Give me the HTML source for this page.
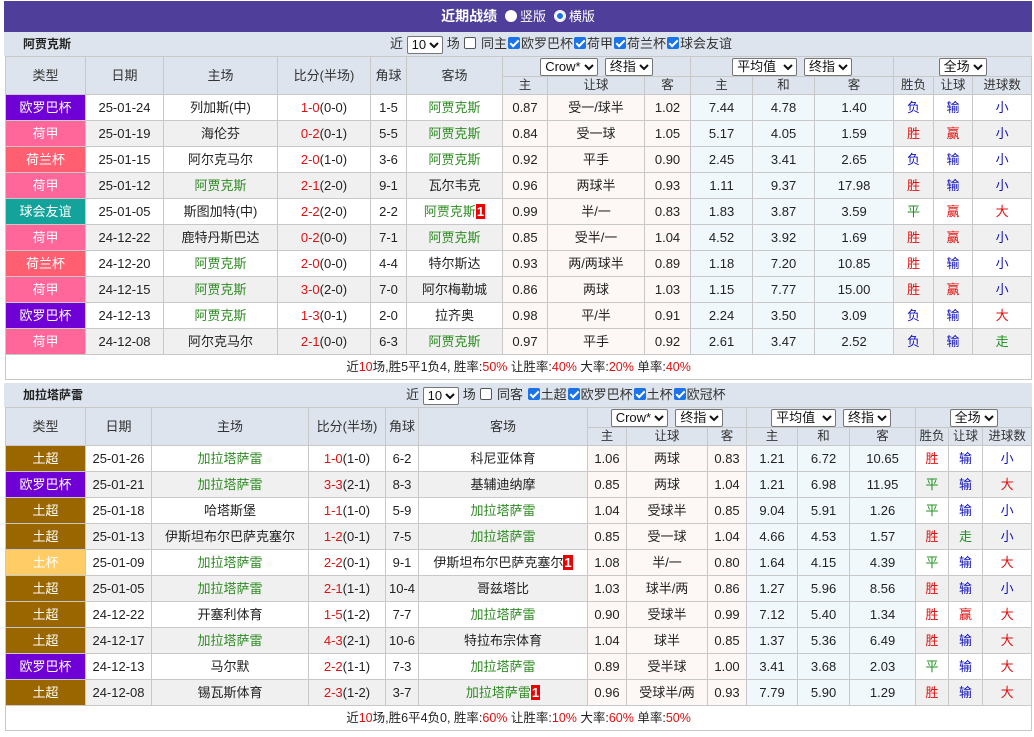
<!DOCTYPE html>
<html><head><meta charset="utf-8"><style>
*{margin:0;padding:0;box-sizing:border-box}
body{width:1034px;height:737px;background:#fff;font-family:"Liberation Sans","Noto Sans CJK SC",sans-serif;font-size:13px;color:#222;position:relative;overflow:hidden}
.title{position:absolute;left:4px;top:1px;width:1028px;height:31px;background:#4f3f9a;color:#fff;font-weight:bold;font-size:14px;text-align:center;line-height:31px}
.title .r{display:inline-block;width:12px;height:12px;border-radius:50%;background:#fff;vertical-align:-1px;margin:0 3px 0 4px;position:relative}
.title .r.on{border:1px solid #fff;background:#1a73e8;box-shadow:inset 0 0 0 2px #fff}
.title span.t{font-weight:normal;font-size:13px}
.bar{position:absolute;left:4px;width:1028px;height:24px;background:#dde4ee;line-height:24px}
.bar .nm{position:absolute;left:19px;font-size:12px;color:#222;font-weight:bold}
.bar .ct{position:absolute;font-size:13px;color:#333}
.cb{display:inline-block;width:12px;height:12px;border:1px solid #555;border-radius:2px;background:#fff;vertical-align:-1px;margin:0 1px}
.cb.on{background:#1a73e8;border-color:#1a73e8;position:relative}
.cb.on:after{content:"";position:absolute;left:3px;top:0px;width:3px;height:7px;border:solid #fff;border-width:0 2px 2px 0;transform:rotate(45deg)}
.sel{display:inline-block;height:18px;line-height:16px;border:1px solid #767676;border-radius:2px;background:#fff;padding:0 3px 0 4px;font-size:13px;color:#111;vertical-align:middle;text-align:left}
.sel svg{vertical-align:0;margin-left:3px}
table{position:absolute;left:5px;border-collapse:collapse;table-layout:fixed;width:1026px}
td{border:1px solid #c8c8c8;text-align:center;height:26px;white-space:nowrap;overflow:hidden;font-size:13px;line-height:16px}
thead td{background:#dde4ee;color:#333;line-height:15px}
thead tr.h1 td{height:20px}
thead tr.h2 td{height:18px;font-size:12.5px}
.ty{color:#fff}
.g{color:#2e8b22}
.rd{color:#e01010}
.bl{color:#1010c0}
.gr{color:#1f8f1f}
tr.e td{background:#f0f0f0}
tr td.o{background:#fdf8f5}
tr td.p{background:#f1f8fc}
.bd{display:inline-block;background:#e00;color:#fff;font-weight:bold;padding:0 1px;line-height:15px}
.sum td{height:25px;background:#fff;font-size:12.5px}
tr td.ep{background:#6f00d6}tr td.hj{background:#ff6699}tr td.hb{background:#ff5f70}tr td.yy{background:#14a39a}tr td.tc{background:#996600}tr td.tb{background:#ffcc66}
</style></head><body>
<div class="title">近期战绩 <span class="r"></span><span class="t">竖版</span> <span class="r on"></span><span class="t">横版</span></div>

<div class="bar" style="top:32px"><span class="nm">阿贾克斯</span>
<span class="ct" style="left:386px">近 <span class="sel">10<svg width="10" height="7" viewBox="0 0 10 7"><path d="M1 1l4 4 4-4" stroke="#111" stroke-width="2" fill="none"/></svg></span> 场 <span class="cb"></span> 同主<span class="cb on"></span>欧罗巴杯<span class="cb on"></span>荷甲<span class="cb on"></span>荷兰杯<span class="cb on"></span>球会友谊</span></div>

<table style="top:56px">
<colgroup><col style="width:80px"><col style="width:78px"><col style="width:114px"><col style="width:93px"><col style="width:36px"><col style="width:96px"><col style="width:45px"><col style="width:97px"><col style="width:46px"><col style="width:62px"><col style="width:62px"><col style="width:79px"><col style="width:40px"><col style="width:39px"><col style="width:59px"></colgroup>
<thead>
<tr class="h1"><td rowspan="2">类型</td><td rowspan="2">日期</td><td rowspan="2">主场</td><td rowspan="2">比分(半场)</td><td rowspan="2">角球</td><td rowspan="2">客场</td>
<td colspan="3"><span class="sel">Crow*<svg width="10" height="7" viewBox="0 0 10 7"><path d="M1 1l4 4 4-4" stroke="#111" stroke-width="2" fill="none"/></svg></span>&nbsp; <span class="sel">终指<svg width="10" height="7" viewBox="0 0 10 7"><path d="M1 1l4 4 4-4" stroke="#111" stroke-width="2" fill="none"/></svg></span></td>
<td colspan="3"><span class="sel">平均值 <svg width="10" height="7" viewBox="0 0 10 7"><path d="M1 1l4 4 4-4" stroke="#111" stroke-width="2" fill="none"/></svg></span>&nbsp; <span class="sel">终指<svg width="10" height="7" viewBox="0 0 10 7"><path d="M1 1l4 4 4-4" stroke="#111" stroke-width="2" fill="none"/></svg></span></td>
<td colspan="3"><span class="sel">全场<svg width="10" height="7" viewBox="0 0 10 7"><path d="M1 1l4 4 4-4" stroke="#111" stroke-width="2" fill="none"/></svg></span></td></tr>
<tr class="h2"><td>主</td><td>让球</td><td>客</td><td>主</td><td>和</td><td>客</td><td>胜负</td><td>让球</td><td>进球数</td></tr>
</thead>
<tbody>
<tr><td class="ty ep">欧罗巴杯</td><td>25-01-24</td><td>列加斯(中)</td><td><span class="rd">1-0</span>(0-0)</td><td>1-5</td><td class="g">阿贾克斯</td><td class="o">0.87</td><td class="o">受一/球半</td><td class="o">1.02</td><td class="p">7.44</td><td class="p">4.78</td><td class="p">1.40</td><td class="bl">负</td><td class="bl">输</td><td class="bl">小</td></tr>
<tr class="e"><td class="ty hj">荷甲</td><td>25-01-19</td><td>海伦芬</td><td><span class="rd">0-2</span>(0-1)</td><td>5-5</td><td class="g">阿贾克斯</td><td class="o">0.84</td><td class="o">受一球</td><td class="o">1.05</td><td class="p">5.17</td><td class="p">4.05</td><td class="p">1.59</td><td class="rd">胜</td><td class="rd">赢</td><td class="bl">小</td></tr>
<tr><td class="ty hb">荷兰杯</td><td>25-01-15</td><td>阿尔克马尔</td><td><span class="rd">2-0</span>(1-0)</td><td>3-6</td><td class="g">阿贾克斯</td><td class="o">0.92</td><td class="o">平手</td><td class="o">0.90</td><td class="p">2.45</td><td class="p">3.41</td><td class="p">2.65</td><td class="bl">负</td><td class="bl">输</td><td class="bl">小</td></tr>
<tr class="e"><td class="ty hj">荷甲</td><td>25-01-12</td><td class="g">阿贾克斯</td><td><span class="rd">2-1</span>(2-0)</td><td>9-1</td><td>瓦尔韦克</td><td class="o">0.96</td><td class="o">两球半</td><td class="o">0.93</td><td class="p">1.11</td><td class="p">9.37</td><td class="p">17.98</td><td class="rd">胜</td><td class="bl">输</td><td class="bl">小</td></tr>
<tr><td class="ty yy">球会友谊</td><td>25-01-05</td><td>斯图加特(中)</td><td><span class="rd">2-2</span>(2-0)</td><td>2-2</td><td class="g">阿贾克斯<span class="bd">1</span></td><td class="o">0.99</td><td class="o">半/一</td><td class="o">0.83</td><td class="p">1.83</td><td class="p">3.87</td><td class="p">3.59</td><td class="gr">平</td><td class="rd">赢</td><td class="rd">大</td></tr>
<tr class="e"><td class="ty hj">荷甲</td><td>24-12-22</td><td>鹿特丹斯巴达</td><td><span class="rd">0-2</span>(0-0)</td><td>7-1</td><td class="g">阿贾克斯</td><td class="o">0.85</td><td class="o">受半/一</td><td class="o">1.04</td><td class="p">4.52</td><td class="p">3.92</td><td class="p">1.69</td><td class="rd">胜</td><td class="rd">赢</td><td class="bl">小</td></tr>
<tr><td class="ty hb">荷兰杯</td><td>24-12-20</td><td class="g">阿贾克斯</td><td><span class="rd">2-0</span>(0-0)</td><td>4-4</td><td>特尔斯达</td><td class="o">0.93</td><td class="o">两/两球半</td><td class="o">0.89</td><td class="p">1.18</td><td class="p">7.20</td><td class="p">10.85</td><td class="rd">胜</td><td class="bl">输</td><td class="bl">小</td></tr>
<tr class="e"><td class="ty hj">荷甲</td><td>24-12-15</td><td class="g">阿贾克斯</td><td><span class="rd">3-0</span>(2-0)</td><td>7-0</td><td>阿尔梅勒城</td><td class="o">0.86</td><td class="o">两球</td><td class="o">1.03</td><td class="p">1.15</td><td class="p">7.77</td><td class="p">15.00</td><td class="rd">胜</td><td class="rd">赢</td><td class="bl">小</td></tr>
<tr><td class="ty ep">欧罗巴杯</td><td>24-12-13</td><td class="g">阿贾克斯</td><td><span class="rd">1-3</span>(0-1)</td><td>2-0</td><td>拉齐奥</td><td class="o">0.98</td><td class="o">平/半</td><td class="o">0.91</td><td class="p">2.24</td><td class="p">3.50</td><td class="p">3.09</td><td class="bl">负</td><td class="bl">输</td><td class="rd">大</td></tr>
<tr class="e"><td class="ty hj">荷甲</td><td>24-12-08</td><td>阿尔克马尔</td><td><span class="rd">2-1</span>(0-0)</td><td>6-3</td><td class="g">阿贾克斯</td><td class="o">0.97</td><td class="o">平手</td><td class="o">0.92</td><td class="p">2.61</td><td class="p">3.47</td><td class="p">2.52</td><td class="bl">负</td><td class="bl">输</td><td class="gr">走</td></tr>
<tr class="sum"><td colspan="15">近<span class="rd">10</span>场,胜5平1负4, 胜率:<span class="rd">50%</span> 让胜率:<span class="rd">40%</span> 大率:<span class="rd">20%</span> 单率:<span class="rd">40%</span></td></tr>
</tbody></table>

<div class="bar" style="top:383px"><span class="nm">加拉塔萨雷</span>
<span class="ct" style="left:402px">近 <span class="sel">10<svg width="10" height="7" viewBox="0 0 10 7"><path d="M1 1l4 4 4-4" stroke="#111" stroke-width="2" fill="none"/></svg></span> 场 <span class="cb"></span> 同客 <span class="cb on"></span>土超<span class="cb on"></span>欧罗巴杯<span class="cb on"></span>土杯<span class="cb on"></span>欧冠杯</span></div>

<table style="top:407px">
<colgroup><col style="width:80px"><col style="width:66px"><col style="width:157px"><col style="width:77px"><col style="width:33px"><col style="width:169px"><col style="width:39px"><col style="width:81px"><col style="width:39px"><col style="width:51px"><col style="width:52px"><col style="width:66px"><col style="width:33px"><col style="width:34px"><col style="width:49px"></colgroup>
<thead>
<tr class="h1"><td rowspan="2">类型</td><td rowspan="2">日期</td><td rowspan="2">主场</td><td rowspan="2">比分(半场)</td><td rowspan="2">角球</td><td rowspan="2">客场</td>
<td colspan="3"><span class="sel">Crow*<svg width="10" height="7" viewBox="0 0 10 7"><path d="M1 1l4 4 4-4" stroke="#111" stroke-width="2" fill="none"/></svg></span>&nbsp; <span class="sel">终指<svg width="10" height="7" viewBox="0 0 10 7"><path d="M1 1l4 4 4-4" stroke="#111" stroke-width="2" fill="none"/></svg></span></td>
<td colspan="3"><span class="sel">平均值 <svg width="10" height="7" viewBox="0 0 10 7"><path d="M1 1l4 4 4-4" stroke="#111" stroke-width="2" fill="none"/></svg></span>&nbsp; <span class="sel">终指<svg width="10" height="7" viewBox="0 0 10 7"><path d="M1 1l4 4 4-4" stroke="#111" stroke-width="2" fill="none"/></svg></span></td>
<td colspan="3"><span class="sel">全场<svg width="10" height="7" viewBox="0 0 10 7"><path d="M1 1l4 4 4-4" stroke="#111" stroke-width="2" fill="none"/></svg></span></td></tr>
<tr class="h2"><td>主</td><td>让球</td><td>客</td><td>主</td><td>和</td><td>客</td><td>胜负</td><td>让球</td><td>进球数</td></tr>
</thead>
<tbody>
<tr><td class="ty tc">土超</td><td>25-01-26</td><td class="g">加拉塔萨雷</td><td><span class="rd">1-0</span>(1-0)</td><td>6-2</td><td>科尼亚体育</td><td class="o">1.06</td><td class="o">两球</td><td class="o">0.83</td><td class="p">1.21</td><td class="p">6.72</td><td class="p">10.65</td><td class="rd">胜</td><td class="bl">输</td><td class="bl">小</td></tr>
<tr class="e"><td class="ty ep">欧罗巴杯</td><td>25-01-21</td><td class="g">加拉塔萨雷</td><td><span class="rd">3-3</span>(2-1)</td><td>8-3</td><td>基辅迪纳摩</td><td class="o">0.85</td><td class="o">两球</td><td class="o">1.04</td><td class="p">1.21</td><td class="p">6.98</td><td class="p">11.95</td><td class="gr">平</td><td class="bl">输</td><td class="rd">大</td></tr>
<tr><td class="ty tc">土超</td><td>25-01-18</td><td>哈塔斯堡</td><td><span class="rd">1-1</span>(1-0)</td><td>5-9</td><td class="g">加拉塔萨雷</td><td class="o">1.04</td><td class="o">受球半</td><td class="o">0.85</td><td class="p">9.04</td><td class="p">5.91</td><td class="p">1.26</td><td class="gr">平</td><td class="bl">输</td><td class="bl">小</td></tr>
<tr class="e"><td class="ty tc">土超</td><td>25-01-13</td><td>伊斯坦布尔巴萨克塞尔</td><td><span class="rd">1-2</span>(0-1)</td><td>7-5</td><td class="g">加拉塔萨雷</td><td class="o">0.85</td><td class="o">受一球</td><td class="o">1.04</td><td class="p">4.66</td><td class="p">4.53</td><td class="p">1.57</td><td class="rd">胜</td><td class="gr">走</td><td class="bl">小</td></tr>
<tr><td class="ty tb">土杯</td><td>25-01-09</td><td class="g">加拉塔萨雷</td><td><span class="rd">2-2</span>(0-1)</td><td>9-1</td><td>伊斯坦布尔巴萨克塞尔<span class="bd">1</span></td><td class="o">1.08</td><td class="o">半/一</td><td class="o">0.80</td><td class="p">1.64</td><td class="p">4.15</td><td class="p">4.39</td><td class="gr">平</td><td class="bl">输</td><td class="rd">大</td></tr>
<tr class="e"><td class="ty tc">土超</td><td>25-01-05</td><td class="g">加拉塔萨雷</td><td><span class="rd">2-1</span>(1-1)</td><td>10-4</td><td>哥兹塔比</td><td class="o">1.03</td><td class="o">球半/两</td><td class="o">0.86</td><td class="p">1.27</td><td class="p">5.96</td><td class="p">8.56</td><td class="rd">胜</td><td class="bl">输</td><td class="bl">小</td></tr>
<tr><td class="ty tc">土超</td><td>24-12-22</td><td>开塞利体育</td><td><span class="rd">1-5</span>(1-2)</td><td>7-7</td><td class="g">加拉塔萨雷</td><td class="o">0.90</td><td class="o">受球半</td><td class="o">0.99</td><td class="p">7.12</td><td class="p">5.40</td><td class="p">1.34</td><td class="rd">胜</td><td class="rd">赢</td><td class="rd">大</td></tr>
<tr class="e"><td class="ty tc">土超</td><td>24-12-17</td><td class="g">加拉塔萨雷</td><td><span class="rd">4-3</span>(2-1)</td><td>10-6</td><td>特拉布宗体育</td><td class="o">1.04</td><td class="o">球半</td><td class="o">0.85</td><td class="p">1.37</td><td class="p">5.36</td><td class="p">6.49</td><td class="rd">胜</td><td class="bl">输</td><td class="rd">大</td></tr>
<tr><td class="ty ep">欧罗巴杯</td><td>24-12-13</td><td>马尔默</td><td><span class="rd">2-2</span>(1-1)</td><td>7-3</td><td class="g">加拉塔萨雷</td><td class="o">0.89</td><td class="o">受半球</td><td class="o">1.00</td><td class="p">3.41</td><td class="p">3.68</td><td class="p">2.03</td><td class="gr">平</td><td class="bl">输</td><td class="rd">大</td></tr>
<tr class="e"><td class="ty tc">土超</td><td>24-12-08</td><td>锡瓦斯体育</td><td><span class="rd">2-3</span>(1-2)</td><td>3-7</td><td class="g">加拉塔萨雷<span class="bd">1</span></td><td class="o">0.96</td><td class="o">受球半/两</td><td class="o">0.93</td><td class="p">7.79</td><td class="p">5.90</td><td class="p">1.29</td><td class="rd">胜</td><td class="bl">输</td><td class="rd">大</td></tr>
<tr class="sum"><td colspan="15">近<span class="rd">10</span>场,胜6平4负0, 胜率:<span class="rd">60%</span> 让胜率:<span class="rd">10%</span> 大率:<span class="rd">60%</span> 单率:<span class="rd">50%</span></td></tr>
</tbody></table>
</body></html>
